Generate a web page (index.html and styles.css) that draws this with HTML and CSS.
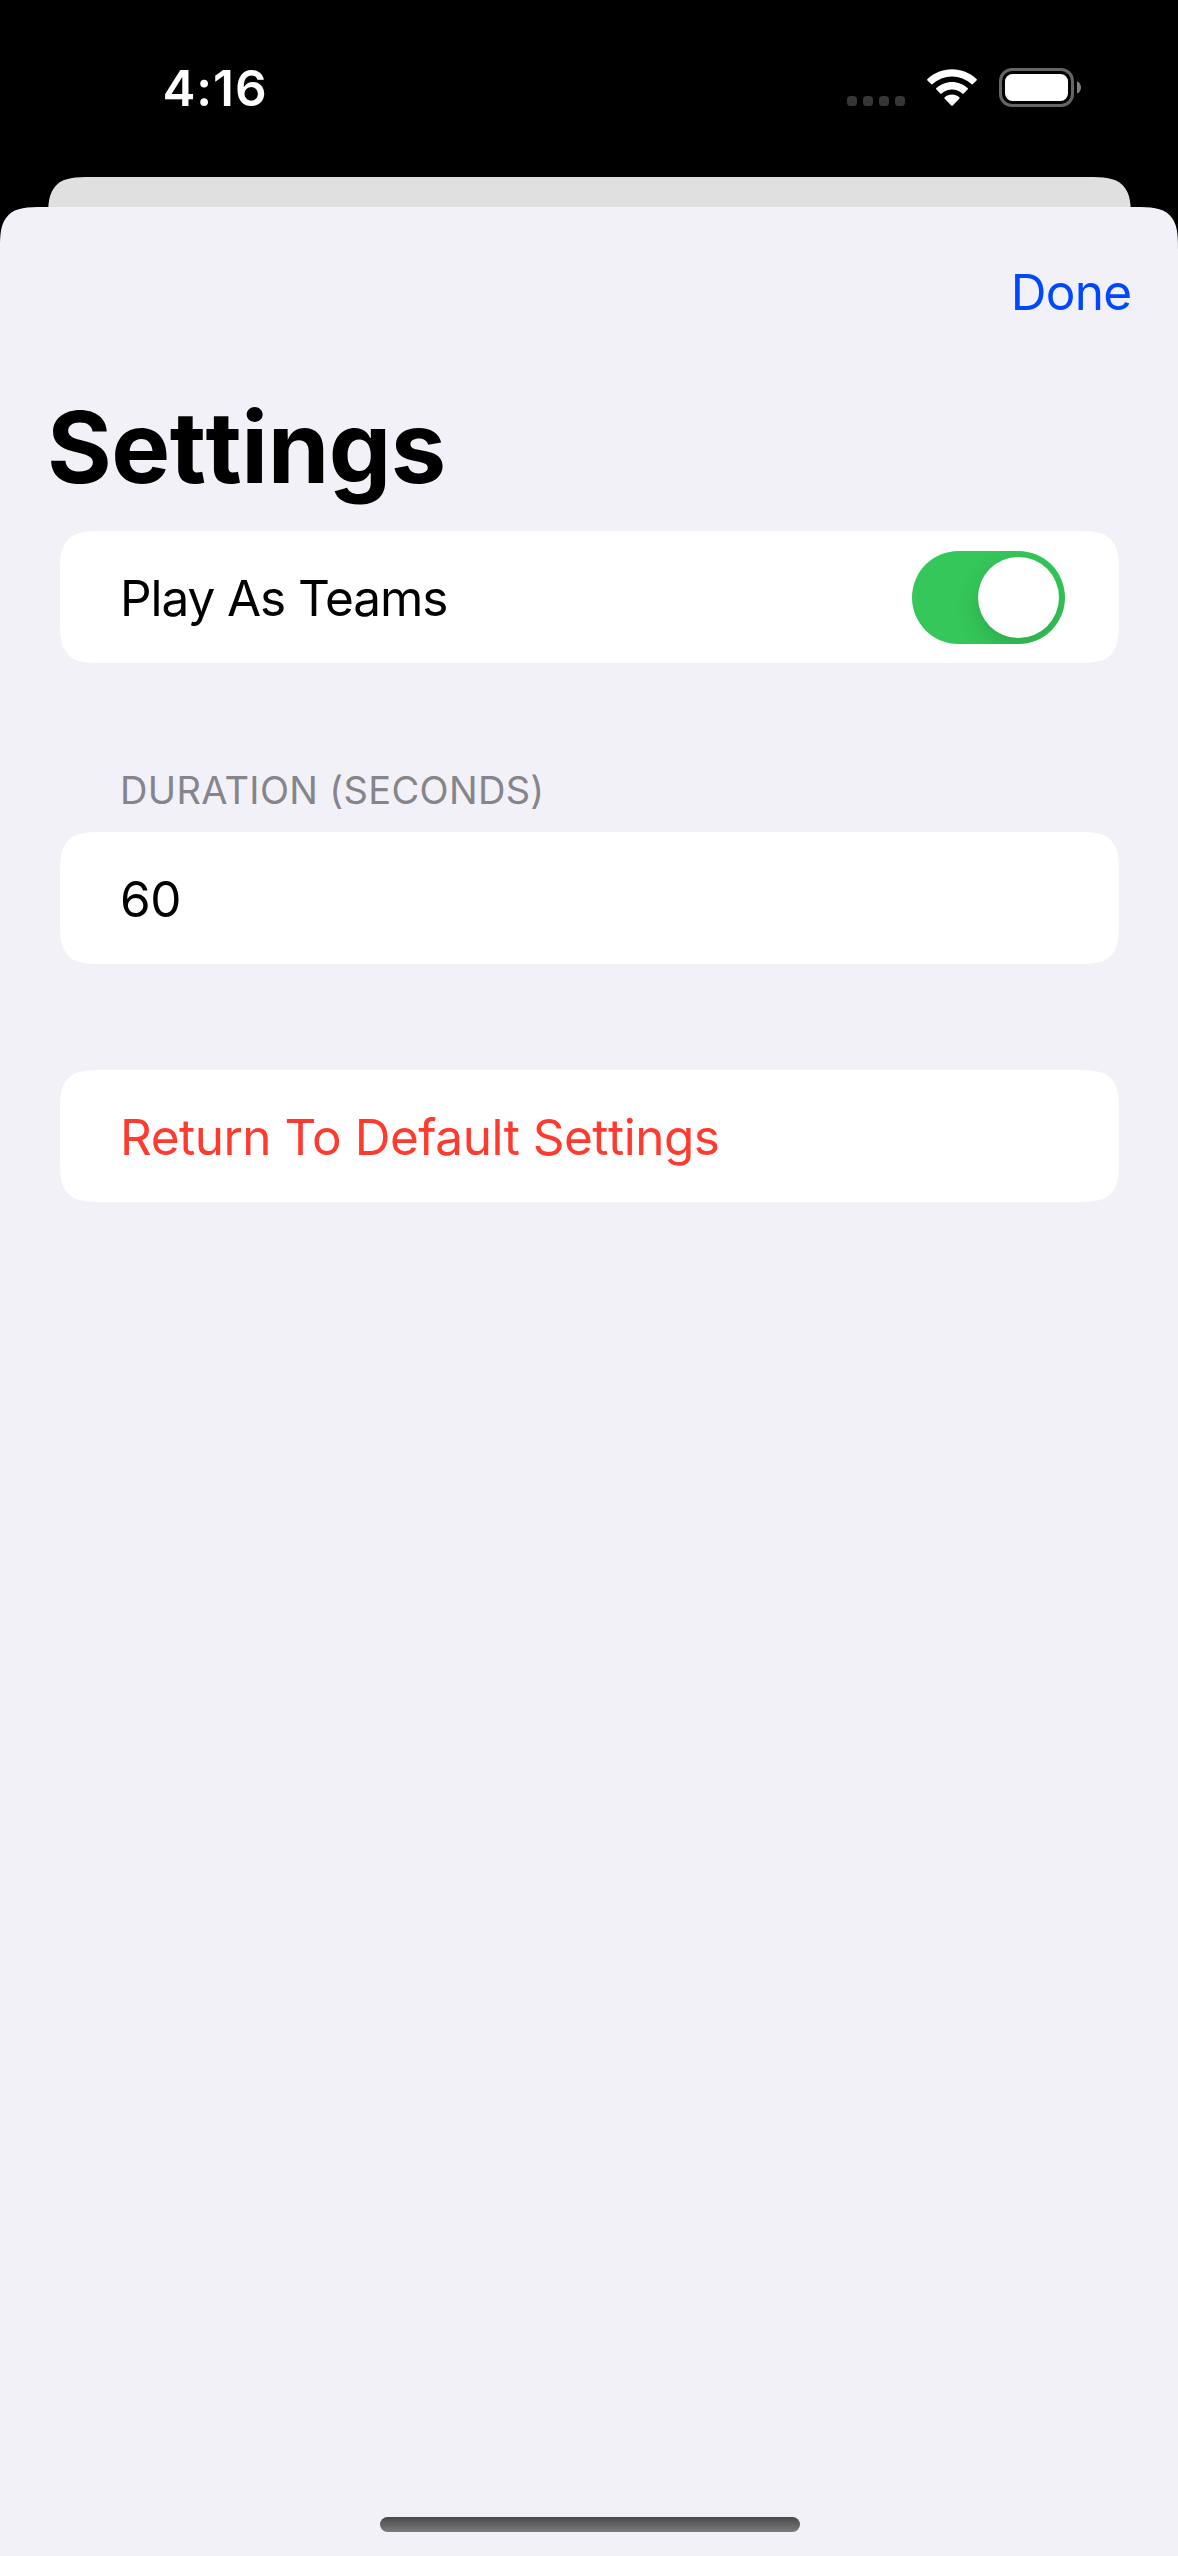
FILE: index.html
```html
<!DOCTYPE html>
<html lang="en">
<head>
<meta charset="utf-8">
<title>Settings</title>
<link rel="stylesheet" href="styles.css">
</head>
<body>
<div class="screen">
  <header class="status-bar">
    <span class="clock">4:16</span>
    <div class="indicators">
      <div class="cellular"><i></i><i></i><i></i><i></i></div>
      <svg class="wifi" width="52" height="40" viewBox="0 0 52 40">
        <path d="M26 2.200c9.300 0 17.900 3.600 24.500 9.700a1 1 0 0 1 0 1.500l-3.600 3.700a1 1 0 0 1-1.400 0a28.500 28.500 0 0 0-39 0a1 1 0 0 1-1.400 0l-3.600-3.700a1 1 0 0 1 0-1.500C8.100 5.800 16.700 2.200 26 2.200z"/>
        <path d="M26 14.900c5.900 0 11.400 2.300 15.600 6.100a1 1 0 0 1 0 1.500l-3.900 3.900a1 1 0 0 1-1.400 0a15.500 15.500 0 0 0-20.600 0a1 1 0 0 1-1.400 0l-3.900-3.900a1 1 0 0 1 0-1.500c4.200-3.800 9.700-6.100 15.600-6.100z"/>
        <path d="M26 27.600c2.700 0 5.200 1 7.200 2.600a1 1 0 0 1 .1 1.500l-6.600 6.700a1 1 0 0 1-1.400 0l-6.600-6.700a1 1 0 0 1 .1-1.500c2-1.600 4.500-2.600 7.200-2.600z"/>
      </svg>
      <svg class="battery" width="84" height="40" viewBox="0 0 84 40">
        <rect class="battery-case" x="1.500" y="1.500" width="72" height="36" rx="11.500"/>
        <rect class="battery-level" x="6" y="6" width="63" height="27" rx="7.500"/>
        <path class="battery-tip" d="M78 13.200c2.400 1 4 3.500 4 6.200s-1.600 5.200-4 6.200z"/>
      </svg>
    </div>
  </header>
  <div class="backdrop-card"></div>
  <main class="sheet">
    <nav class="nav-bar"><button class="done">Done</button></nav>
    <h1 class="title">Settings</h1>
    <div class="form">
      <section class="card">
        <span class="label teams">Play As Teams</span>
        <span class="switch" role="switch" aria-checked="true"><span class="knob"></span></span>
      </section>
      <h2 class="section-header">DURATION (SECONDS)</h2>
      <section class="card"><span class="label">60</span></section>
      <section class="card reset"><span class="label danger">Return To Default <span class="loose">Settings</span></span></section>
    </div>
    <div class="home-indicator"></div>
  </main>
</div>
</body>
</html>
```
FILE: styles.css
```css
* {
  box-sizing: border-box;
}

body {
  margin: 0;
  background: #000;
  font-family: Inter, "Liberation Sans", sans-serif;
  color: #000;
}

.screen {
  display: flex;
  flex-direction: column;
  width: 1178px;
  height: 2556px;
  overflow: hidden;
  background: #000;
}

.status-bar {
  display: flex;
  justify-content: space-between;
  height: 177px;
  padding: 68px 95px 0 162.5px;
}

.clock {
  color: #fff;
  font-size: 49.5px;
  font-weight: 600;
  line-height: 40px;
  letter-spacing: 0.9px;
}

.indicators {
  display: flex;
  align-items: flex-start;
}

.cellular {
  display: flex;
  gap: 6px;
  margin: 28px 21px 0 0;
}

.cellular i {
  width: 10px;
  height: 10px;
  border-radius: 3.5px;
  background: #363636;
}

.wifi {
  margin: -1px 21px 0 0;
  fill: #fff;
}

.battery-case {
  fill: none;
  stroke: #656565;
  stroke-width: 3;
}

.battery-level {
  fill: #fff;
}

.battery-tip {
  fill: #808080;
}

.backdrop-card {
  height: 43px;
  margin: 0 47px -13px 48px;
  border-radius: 30px 30px 0 0;
  background: #e0e0e0;
}

.sheet {
  display: flex;
  flex: 1;
  flex-direction: column;
  border-radius: 30px 30px 0 0;
  background: #f2f1f7;
}

.nav-bar {
  display: flex;
  justify-content: flex-end;
  padding: 55px 46.5px 0;
}

.done {
  padding: 0;
  border: 0;
  background: none;
  color: #0048ff;
  font: inherit;
  font-size: 49.5px;
  line-height: 60px;
  letter-spacing: -0.7px;
}

.title {
  margin: 65px 0 0 47px;
  font-size: 99px;
  font-weight: 700;
  font-kerning: none;
  line-height: 120px;
  letter-spacing: -0.5px;
}

.form {
  padding: 24px 59px 0 60px;
}

.card {
  display: flex;
  align-items: center;
  justify-content: space-between;
  height: 132px;
  padding: 0 54px 0 60px;
  border-radius: 30px;
  background: #fff;
}

.label {
  padding-top: 2px;
  font-size: 49.5px;
  line-height: 60px;
  letter-spacing: -0.5px;
}

.teams {
  letter-spacing: -1.08px;
}

.loose {
  font-kerning: none;
}

.switch {
  display: flex;
  justify-content: flex-end;
  width: 153px;
  height: 93px;
  padding: 6px;
  overflow: hidden;
  border-radius: 47px;
  background: #35c759;
}

.knob {
  width: 81px;
  height: 81px;
  border-radius: 50%;
  background: #fff;
  box-shadow: 0 9px 24px rgba(0, 0, 0, 0.15);
}

.section-header {
  margin: 0;
  padding: 102px 60px 17px;
  color: #85858b;
  font-size: 38px;
  font-weight: 400;
  line-height: 50px;
  letter-spacing: 0.34px;
}

.reset {
  margin-top: 106px;
}

.danger {
  color: #ff3b30;
}

.home-indicator {
  width: 420px;
  height: 15px;
  margin: auto 0 24px 380px;
  border-radius: 8px;
  background: linear-gradient(#484848, #7c7c7c);
}

@supports (corner-shape: superellipse(1.7)) {
  .card {
    border-radius: 43px;
    corner-shape: superellipse(1.7);
  }

  .backdrop-card,
  .sheet {
    border-radius: 43px 43px 0 0;
    corner-shape: superellipse(1.7);
  }
}
```
